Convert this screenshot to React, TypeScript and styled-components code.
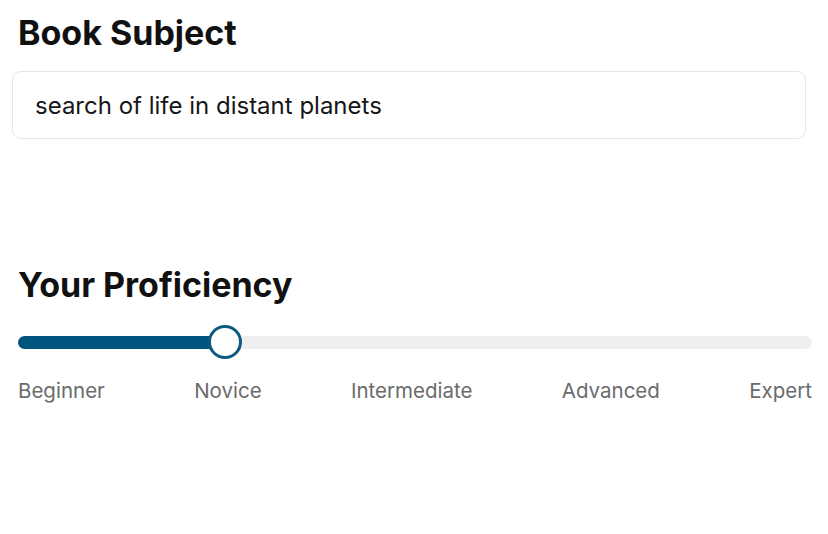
import React from "react";
import styled, { createGlobalStyle } from "styled-components";

const Global = createGlobalStyle`
  html, body { margin: 0; padding: 0; background: #ffffff; }
  body { font-family: Inter, "Noto Sans", sans-serif; color: #111111; }
`;

const Page = styled.div`
  width: 828px;
  height: 534px;
  box-sizing: border-box;
  padding: 12px 16px 0 12px;
  display: flex;
  flex-direction: column;
`;

const Section = styled.section`
  display: flex;
  flex-direction: column;
`;

const Title = styled.h2<{ $mb: number }>`
  margin: 0 0 ${(p) => p.$mb}px 6px;
  font-size: 34px;
  line-height: 42px;
  font-weight: 700;
  color: #111111;
`;

const Input = styled.input`
  box-sizing: border-box;
  width: 794px;
  height: 68px;
  border: 1.5px solid #e6e6e6;
  border-radius: 9px;
  padding: 0 22px;
  font-family: Inter, "Noto Sans", sans-serif;
  font-size: 24px;
  color: #161616;
  background: #ffffff;
  outline: none;
`;

const Spacer = styled.div<{ $h: number }>`
  height: ${(p) => p.$h}px;
`;

const SliderBox = styled.div`
  margin-left: 6px;
  width: 794px;
  display: flex;
  flex-direction: column;
`;

const TrackArea = styled.div`
  position: relative;
  height: 34px;
  display: flex;
  align-items: center;
`;

const Track = styled.div`
  position: relative;
  width: 100%;
  height: 13px;
  border-radius: 7px;
  background: #efefef;
`;

const Fill = styled.div`
  position: absolute;
  left: 0;
  top: 0;
  bottom: 0;
  border-radius: 7px;
  background: #00557f;
`;

const Thumb = styled.div`
  position: absolute;
  top: 50%;
  width: 34px;
  height: 34px;
  box-sizing: border-box;
  border-radius: 50%;
  border: 3px solid #0d5a80;
  background: #ffffff;
  transform: translate(-50%, -50%);
`;

const Labels = styled.div`
  margin-top: 19px;
  display: flex;
  justify-content: space-between;
`;

const Label = styled.span`
  font-size: 20.5px;
  line-height: 26px;
  color: #6b6b6b;
`;

const levels = ["Beginner", "Novice", "Intermediate", "Advanced", "Expert"];

export default function App() {
  const value = 1;
  const width = 794;
  const thumb = 34;
  const pos = thumb / 2 + ((width - thumb) * value) / (levels.length - 1);
  return (
    <>
      <Global />
      <Page>
        <Section>
          <Title $mb={17}>Book Subject</Title>
          <Input readOnly value="search of life in distant planets" />
        </Section>
        <Spacer $h={125} />
        <Section>
          <Title $mb={19}>Your Proficiency</Title>
          <SliderBox>
            <TrackArea>
              <Track>
                <Fill style={{ width: pos }} />
              </Track>
              <Thumb style={{ left: pos }} />
            </TrackArea>
            <Labels>
              {levels.map((l) => (
                <Label key={l}>{l}</Label>
              ))}
            </Labels>
          </SliderBox>
        </Section>
      </Page>
    </>
  );
}
